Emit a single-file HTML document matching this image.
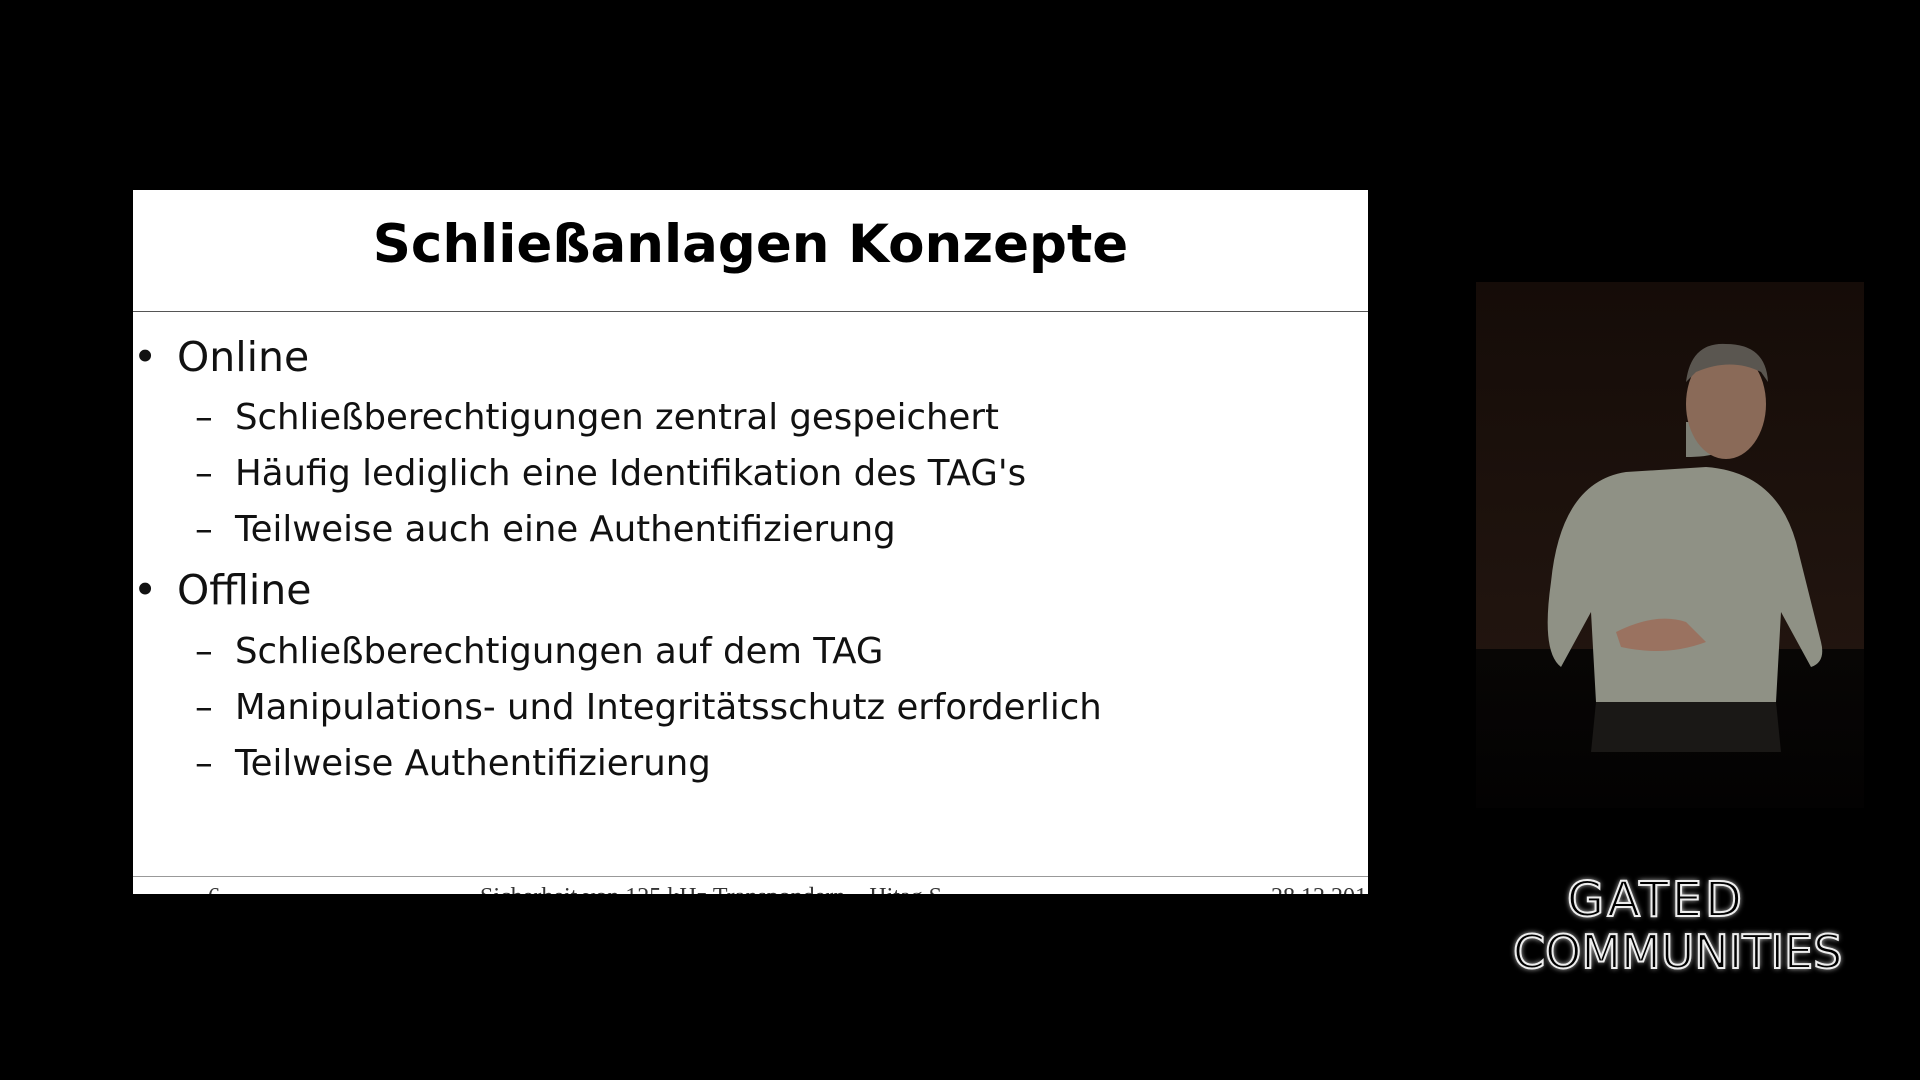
<!DOCTYPE html>
<html><head><meta charset="utf-8"><style>
html,body{margin:0;padding:0;background:#000;width:1920px;height:1080px;overflow:hidden;position:relative;font-family:"DejaVu Sans","Liberation Sans",sans-serif}
.slide{position:absolute;left:133px;top:190px;width:1235px;height:704px;background:#fff;overflow:hidden}
.title{position:absolute;left:0;width:100%;top:24px;text-align:center;font-weight:bold;font-size:53px;color:#000}
.hr{position:absolute;left:0;width:100%;height:1px;background:#555}
.t{position:absolute;color:#111;white-space:nowrap}
.b{font-size:41px}
.s{font-size:35.5px}
.foot{position:absolute;top:694px;font-family:"Liberation Serif",serif;font-size:24px;color:#333;white-space:nowrap}
.video{position:absolute;left:1476px;top:282px;width:388px;height:526px;background:linear-gradient(#150c08,#231610 80%,#1a110c);overflow:hidden}
.floor{position:absolute;left:0;top:367px;width:100%;height:159px;background:linear-gradient(#080605,#030202)}
.logo{position:absolute;color:#000;font-family:"DejaVu Sans",sans-serif;letter-spacing:3px;-webkit-text-stroke:2px #eee;text-shadow:0 0 6px #fff;white-space:nowrap}
</style></head><body>
<div class="slide">
  <div class="title">Schließanlagen Konzepte</div>
  <div class="hr" style="top:121px"></div>
  <div class="t b" style="left:0;top:143px">•</div><div class="t b" style="left:44px;top:143px">Online</div>
  <div class="t s" style="left:62px;top:207px">–</div><div class="t s" style="left:102px;top:207px">Schließberechtigungen zentral gespeichert</div>
  <div class="t s" style="left:62px;top:263px">–</div><div class="t s" style="left:102px;top:263px">Häufig lediglich eine Identifikation des TAG's</div>
  <div class="t s" style="left:62px;top:319px">–</div><div class="t s" style="left:102px;top:319px">Teilweise auch eine Authentifizierung</div>
  <div class="t b" style="left:0;top:376px">•</div><div class="t b" style="left:44px;top:376px">Offline</div>
  <div class="t s" style="left:62px;top:441px">–</div><div class="t s" style="left:102px;top:441px">Schließberechtigungen auf dem TAG</div>
  <div class="t s" style="left:62px;top:497px">–</div><div class="t s" style="left:102px;top:497px">Manipulations- und Integritätsschutz erforderlich</div>
  <div class="t s" style="left:62px;top:553px">–</div><div class="t s" style="left:102px;top:553px">Teilweise Authentifizierung</div>
  <div class="hr" style="top:686px;background:#999"></div>
  <div class="foot" style="left:75px">6</div>
  <div class="foot" style="left:347px">Sicherheit von 125 kHz Transpondern – Hitag S</div>
  <div class="foot" style="left:1138px">28.12.2015</div>
</div>
<div class="video">
  <div class="floor"></div>
  <svg width="388" height="526" style="position:absolute;left:0;top:0">
    <path d="M75 300 Q85 200 150 190 L230 185 Q300 190 320 260 L345 360 Q350 380 335 385 L305 330 L300 420 L120 420 L115 330 L85 385 Q65 370 75 300Z" fill="#8f9185"/>
    <path d="M210 175 Q250 175 255 160 L255 140 L210 140Z" fill="#7d7f75"/>
    <ellipse cx="250" cy="122" rx="40" ry="55" fill="#8a6a58"/>
    <path d="M210 100 Q215 60 250 62 Q290 62 292 100 L285 90 Q255 75 220 90Z" fill="#5a5650"/>
    <path d="M140 350 Q180 330 210 340 L230 360 Q190 375 145 365Z" fill="#9a7260"/>
    <path d="M120 420 L300 420 L305 470 L115 470Z" fill="#1a1816"/>
  </svg>
</div>
<div class="logo" style="left:1567px;top:872px;font-size:48px">GATED</div>
<div class="logo" style="left:1513px;top:925px;font-size:46px;letter-spacing:0px">COMMUNITIES</div>
</body></html>
